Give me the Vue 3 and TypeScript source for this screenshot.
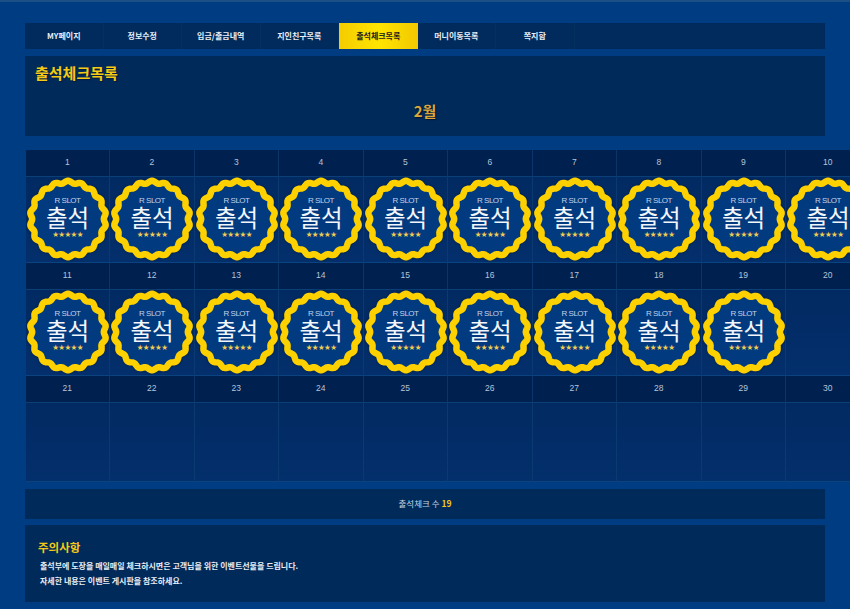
<template>
  <div class="page">
    <!-- 상단 탭 -->
    <nav class="tabs">
      <a v-for="tab in tabs" :key="tab" class="tab" :class="{ active: tab === activeTab }">{{ tab }}</a>
    </nav>

    <section class="head-panel">
      <h2 class="page-title">{{ activeTab }}</h2>
      <div class="month">2월</div>
    </section>

    <!-- 달력 -->
    <div class="calendar">
      <div v-for="row in rows" :key="row.id" class="week">
        <div class="days">
          <div v-for="d in row.days" :key="d" class="day-no">{{ d }}</div>
        </div>
        <div class="stamps">
          <div v-for="d in row.days" :key="d" class="stamp-cell">
            <div v-if="d <= checked" class="stamp">
              <svg class="seal" viewBox="0 0 84 84" width="84" height="84">
                <path :d="sealPath" fill="#023a80" stroke="#fdd000" stroke-width="6.5" stroke-linejoin="round" />
              </svg>
              <div class="stamp-text">
                <span class="brand">R SLOT</span>
                <span class="word">출석</span>
                <span class="stars">★★★★★</span>
              </div>
            </div>
          </div>
        </div>
      </div>
    </div>

    <div class="total">출석체크 수 <b>{{ checked }}</b></div>

    <section class="notes">
      <h3 class="notes-title">주의사항</h3>
      <p>출석부에 도장을 매일매일 체크하시면은 고객님을 위한 이벤트선물을 드립니다.</p>
      <p>자세한 내용은 이벤트 게시판을 참조하세요.</p>
    </section>
  </div>
</template>

<script setup lang="ts">
const tabs = ['MY페이지', '정보수정', '입금/출금내역', '지인친구목록', '출석체크목록', '머니이동목록', '쪽지함']
const activeTab = '출석체크목록'
const checked = 19

const rows = [0, 1, 2].map((id) => ({
  id,
  days: Array.from({ length: 10 }, (_, i) => id * 10 + i + 1),
}))

// 물결 모양 도장 테두리
const buildSeal = (bumps: number, radius: number, wave: number): string => {
  const points: string[] = []
  for (let i = 0; i < 360; i += 2) {
    const a = (i * Math.PI) / 180
    const r = radius + wave * Math.cos(bumps * a)
    const x = 42 + r * Math.sin(a)
    const y = 42 - r * Math.cos(a)
    points.push(`${x.toFixed(2)} ${y.toFixed(2)}`)
  }
  return `M${points.join('L')}Z`
}

const sealPath = buildSeal(18, 37, 1.2)
</script>

<style>
html,
body {
  margin: 0;
  background: #003c82;
  overflow: hidden;
}
</style>

<style scoped>
.page {
  width: 850px;
  height: 609px;
  box-sizing: border-box;
  padding: 21px 0 0 25px;
  overflow: hidden;
  background: #003c82;
  border-top: 2px solid #1c4f86;
  font-family: "Noto Sans CJK KR", "Noto Sans", sans-serif;
  color: #fff;
}

.tabs {
  display: flex;
  width: 800px;
  height: 26px;
  background: #002b5c;
}

.tab {
  width: 78.5px;
  border-right: 1px solid #04305f;
  box-sizing: border-box;
  font-size: 8px;
  font-weight: 700;
  line-height: 26px;
  text-align: center;
  color: #e8eef6;
}

.tab.active {
  background: linear-gradient(90deg, #f4cc00, #ffe400 50%, #f2c800);
  color: #1a1a1a;
  border-right: none;
}

.head-panel {
  width: 800px;
  height: 80px;
  margin-top: 7px;
  padding: 7px 10px 0;
  box-sizing: border-box;
  background: #002a59;
}

.page-title {
  margin: 0;
  font-size: 15px;
  font-weight: 700;
  line-height: 19px;
  color: #f5c914;
  text-shadow: 1px 1px 1px #001a3c;
}

.month {
  margin-top: 18px;
  font-size: 15px;
  font-weight: 700;
  line-height: 22px;
  text-align: center;
  color: #dca63c;
  text-shadow: 1px 1px 1px #00132d;
}

.calendar {
  width: 845px;
  margin-top: 14px;
  padding-left: 0.5px;
}

.days,
.stamps {
  display: grid;
  grid-template-columns: repeat(10, 84.5px);
}

.days {
  height: 26.5px;
  background: #002050;
}

.day-no {
  font-family: "Liberation Sans", sans-serif;
  font-size: 8.5px;
  line-height: 25px;
  text-align: center;
  color: #b5c6da;
  border-right: 1px solid #0b3568;
  border-bottom: 1px solid #0b3f78;
  box-sizing: border-box;
}

.stamps {
  height: 86.5px;
  background: linear-gradient(180deg, #022a62, #032f6c);
}

.stamp-cell {
  border-right: 1px solid #0b3a70;
  border-bottom: 1px solid #0b4280;
  box-sizing: border-box;
}

.week:last-child .stamps {
  height: 79px;
}

.stamp {
  display: grid;
  justify-items: center;
  align-items: center;
  height: 85px;
}

.seal,
.stamp-text {
  grid-area: 1 / 1;
}

.seal {
  filter: drop-shadow(0 0 1px #001b40);
}

.stamp-text {
  position: relative;
  display: flex;
  flex-direction: column;
  align-items: center;
  padding-bottom: 2px;
}

.brand {
  font-family: "Liberation Sans", sans-serif;
  font-size: 8px;
  letter-spacing: -0.5px;
  line-height: 8px;
  color: #c5d3e6;
}

.word {
  font-size: 23.5px;
  line-height: 24px;
  color: #f2f6fb;
}

.stars {
  margin-top: 2px;
  font-family: "DejaVu Sans", sans-serif;
  font-size: 7.5px;
  line-height: 8px;
  letter-spacing: -0.6px;
  color: #f0cc50;
}

.total {
  width: 800px;
  height: 30px;
  margin-top: 7.5px;
  background: #002a59;
  font-size: 8.5px;
  line-height: 29px;
  text-align: center;
  color: #c8d6e6;
}

.total b {
  color: #f5c914;
}

.notes {
  width: 800px;
  height: 77px;
  margin-top: 6px;
  padding: 14px 13px 0;
  box-sizing: border-box;
  background: #002a59;
}

.notes-title {
  margin: 0 0 3px;
  font-size: 11.5px;
  font-weight: 700;
  line-height: 16px;
  color: #f5c914;
}

.notes p {
  margin: 0 0 0 2px;
  font-size: 8px;
  font-weight: 700;
  line-height: 15px;
  color: #e8eef6;
}
</style>
